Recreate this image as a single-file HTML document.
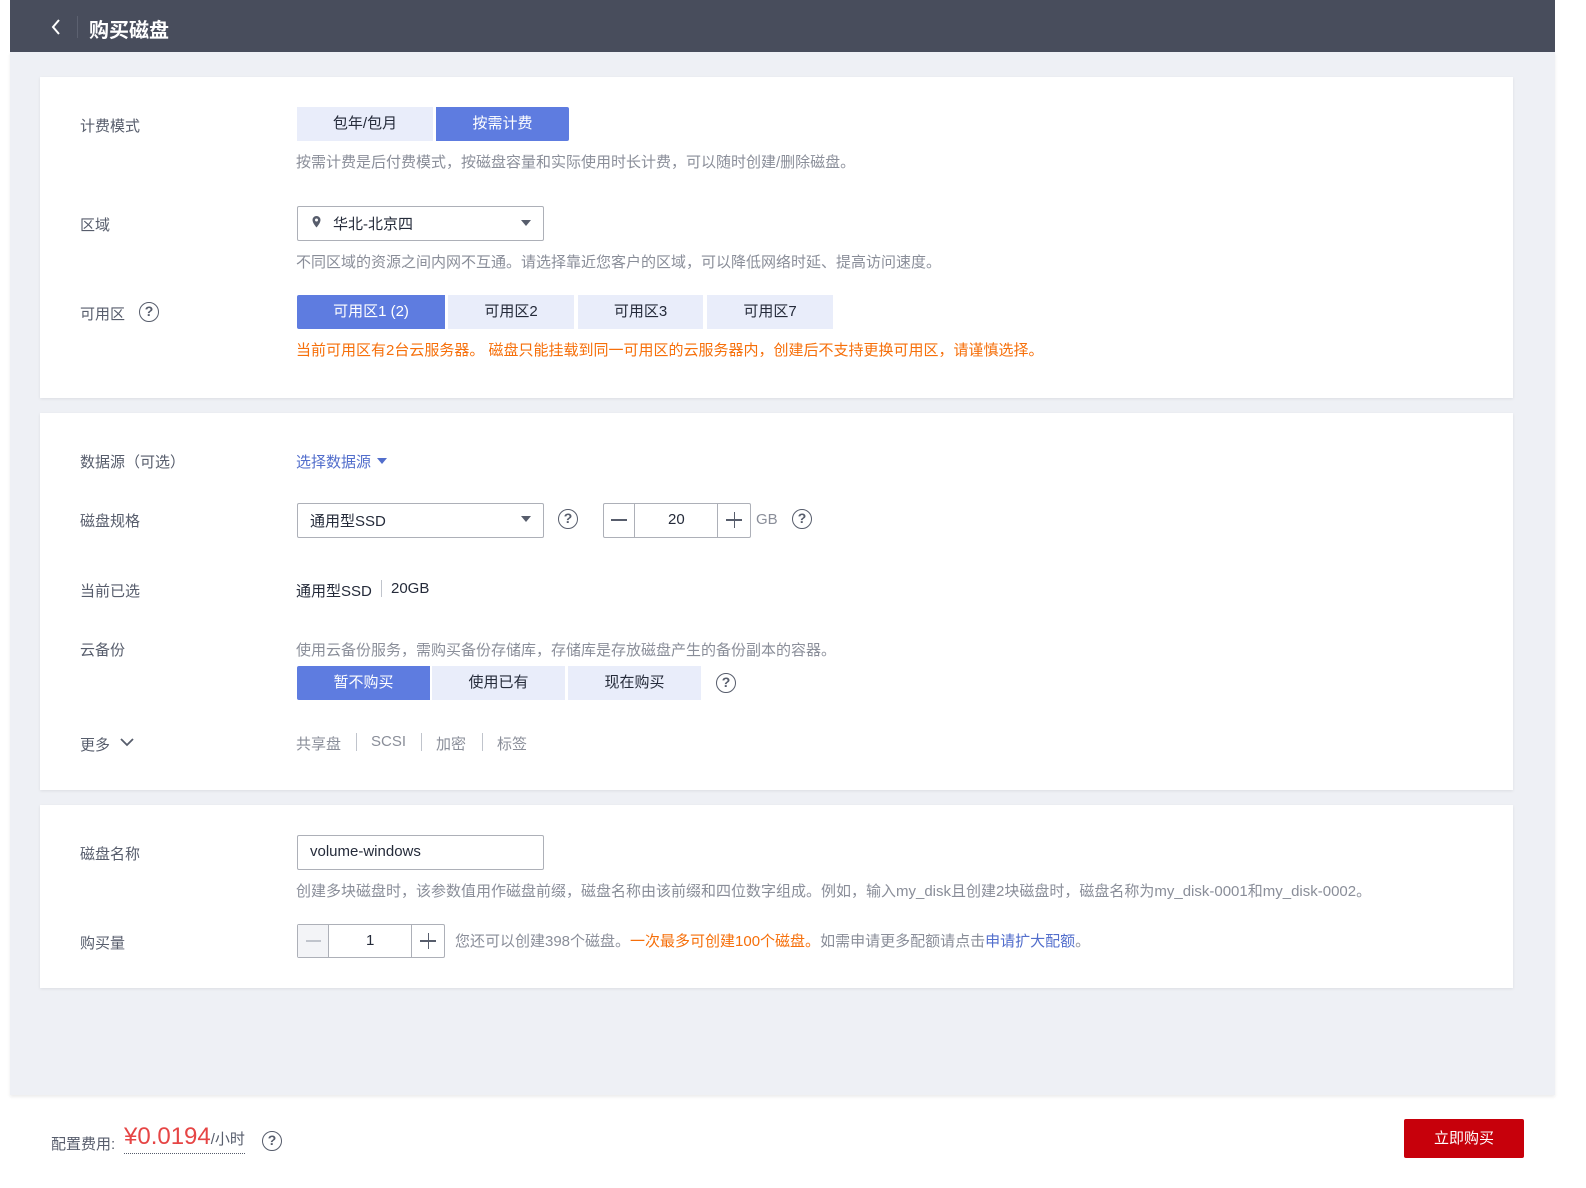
<!DOCTYPE html>
<html><head><meta charset="utf-8"><style>
*{margin:0;padding:0;box-sizing:border-box}
body{width:1586px;height:1188px;position:relative;background:#fff;font-family:"Liberation Sans","Noto Sans CJK SC",sans-serif;font-size:15px;color:#252b3a;overflow:hidden}
.a{position:absolute;white-space:nowrap}
.bg{position:absolute;left:10px;top:52px;width:1545px;height:1043px;background:#eef0f5;box-shadow:0 2px 3px rgba(0,0,0,.08)}
.hd{position:absolute;left:10px;top:0;width:1545px;height:52px;background:#484d5c}
.card{position:absolute;left:40px;width:1473px;background:#fff;box-shadow:0 1px 3px rgba(0,0,0,.08)}
.lbl{color:#575d6c;font-size:15px}
.hint{color:#8a8e99;font-size:15px}
.btn{position:absolute;height:34px;line-height:34px;text-align:center;background:#e9edfa;color:#252b3a;font-size:15px}
.on{background:#5e7ce0;color:#fff}
.sel{position:absolute;height:35px;border:1px solid #adb0b8;border-radius:2px;background:#fff}
.q{position:absolute;width:20px;height:20px;border:1.6px solid #575d6c;border-radius:50%;text-align:center;line-height:17px;font-size:14px;font-weight:bold;color:#575d6c}
.caret{position:absolute;width:0;height:0;border-left:5px solid transparent;border-right:5px solid transparent;border-top:6px solid #575d6c}
</style></head><body>
<div class="bg"></div>
<div class="hd"></div>
<svg class="a" style="left:49px;top:17px" width="14" height="20"><path d="M10 3 L4 10 L10 17" stroke="#fff" stroke-width="2" fill="none"/></svg>
<div class="a" style="left:77px;top:16px;width:1px;height:22px;background:#5c6170"></div>
<div class="a" style="left:89px;top:14px;color:#fff;font-size:20px;font-weight:bold">购买磁盘</div>

<div class="card" style="top:77px;height:321px"></div>
<div class="card" style="top:413px;height:377px"></div>
<div class="card" style="top:805px;height:183px"></div>

<div class="a lbl" style="left:80px;top:115px">计费模式</div>
<div class="btn" style="left:297px;top:107px;width:136px">包年/包月</div>
<div class="btn on" style="left:436px;top:107px;width:133px;border-radius:0 2px 2px 0">按需计费</div>
<div class="a hint" style="left:296px;top:151px">按需计费是后付费模式，按磁盘容量和实际使用时长计费，可以随时创建/删除磁盘。</div>

<div class="a lbl" style="left:80px;top:214px">区域</div>
<div class="sel" style="left:297px;top:206px;width:247px"></div>
<svg class="a" style="left:311px;top:215px" width="11" height="14"><path d="M5.5 1a4 4 0 0 0-4 4c0 3 4 7.5 4 7.5s4-4.5 4-7.5a4 4 0 0 0-4-4z" fill="#575d6c"/><circle cx="5.5" cy="5" r="1.5" fill="#fff"/></svg>
<div class="a" style="left:333px;top:213px">华北-北京四</div>
<div class="caret" style="left:521px;top:220px"></div>
<div class="a hint" style="left:296px;top:251px">不同区域的资源之间内网不互通。请选择靠近您客户的区域，可以降低网络时延、提高访问速度。</div>

<div class="a lbl" style="left:80px;top:303px">可用区</div>
<div class="q" style="left:139px;top:302px">?</div>
<div class="btn on" style="left:297px;top:295px;width:148px;border-radius:2px 0 0 2px">可用区1 (2)</div>
<div class="btn" style="left:448px;top:295px;width:126px">可用区2</div>
<div class="btn" style="left:578px;top:295px;width:125px">可用区3</div>
<div class="btn" style="left:707px;top:295px;width:126px">可用区7</div>
<div class="a" style="left:296px;top:339px;color:#f66f0a">当前可用区有2台云服务器。 磁盘只能挂载到同一可用区的云服务器内，创建后不支持更换可用区，请谨慎选择。</div>

<div class="a lbl" style="left:80px;top:451px">数据源（可选）</div>
<div class="a" style="left:296px;top:451px;color:#526ecc">选择数据源</div>
<div class="caret" style="left:377px;top:458px;border-top-color:#526ecc"></div>

<div class="a lbl" style="left:80px;top:510px">磁盘规格</div>
<div class="sel" style="left:297px;top:503px;width:247px"></div>
<div class="a" style="left:310px;top:510px">通用型SSD</div>
<div class="caret" style="left:521px;top:516px"></div>
<div class="q" style="left:558px;top:509px">?</div>
<div class="sel" style="left:603px;top:503px;width:148px"></div>
<div class="a" style="left:634px;top:504px;width:1px;height:33px;background:#adb0b8"></div>
<div class="a" style="left:717px;top:504px;width:1px;height:33px;background:#adb0b8"></div>
<div class="a" style="left:611px;top:519px;width:16px;height:1.5px;background:#575d6c"></div>
<div class="a" style="left:726px;top:519px;width:16px;height:1.5px;background:#575d6c"></div>
<div class="a" style="left:733.5px;top:512px;width:1.5px;height:16px;background:#575d6c"></div>
<div class="a" style="left:668px;top:511px">20</div>
<div class="a hint" style="left:756px;top:511px">GB</div>
<div class="q" style="left:792px;top:509px">?</div>

<div class="a lbl" style="left:80px;top:580px">当前已选</div>
<div class="a" style="left:296px;top:580px">通用型SSD</div>
<div class="a" style="left:381px;top:580px;width:1px;height:17px;background:#c0c4cc"></div>
<div class="a" style="left:391px;top:580px">20GB</div>

<div class="a lbl" style="left:80px;top:639px">云备份</div>
<div class="a hint" style="left:296px;top:639px">使用云备份服务，需购买备份存储库，存储库是存放磁盘产生的备份副本的容器。</div>
<div class="btn on" style="left:297px;top:666px;width:133px;border-radius:2px 0 0 2px">暂不购买</div>
<div class="btn" style="left:432px;top:666px;width:133px">使用已有</div>
<div class="btn" style="left:568px;top:666px;width:133px">现在购买</div>
<div class="q" style="left:716px;top:673px">?</div>

<div class="a lbl" style="left:80px;top:734px">更多</div>
<svg class="a" style="left:120px;top:737px" width="14" height="10"><path d="M1 2 L7 8 L13 2" stroke="#575d6c" stroke-width="1.8" fill="none"/></svg>
<div class="a hint" style="left:296px;top:733px">共享盘</div>
<div class="a" style="left:356px;top:733px;width:1px;height:18px;background:#c0c4cc"></div>
<div class="a hint" style="left:371px;top:733px">SCSI</div>
<div class="a" style="left:421px;top:733px;width:1px;height:18px;background:#c0c4cc"></div>
<div class="a hint" style="left:436px;top:733px">加密</div>
<div class="a" style="left:482px;top:733px;width:1px;height:18px;background:#c0c4cc"></div>
<div class="a hint" style="left:497px;top:733px">标签</div>

<div class="a lbl" style="left:80px;top:843px">磁盘名称</div>
<div class="sel" style="left:297px;top:835px;width:247px"></div>
<div class="a" style="left:310px;top:843px">volume-windows</div>
<div class="a hint" style="left:296px;top:880px">创建多块磁盘时，该参数值用作磁盘前缀，磁盘名称由该前缀和四位数字组成。例如，输入my_disk且创建2块磁盘时，磁盘名称为my_disk-0001和my_disk-0002。</div>

<div class="a lbl" style="left:80px;top:932px">购买量</div>
<div class="sel" style="left:297px;top:924px;width:148px;height:34px"></div>
<div class="a" style="left:298px;top:925px;width:31px;height:32px;background:#f3f4f7;border-right:1px solid #adb0b8"></div>
<div class="a" style="left:411px;top:925px;width:1px;height:32px;background:#adb0b8"></div>
<div class="a" style="left:306px;top:940px;width:15px;height:1.5px;background:#c0c4cc"></div>
<div class="a" style="left:420px;top:940px;width:16px;height:1.5px;background:#575d6c"></div>
<div class="a" style="left:427.5px;top:933px;width:1.5px;height:16px;background:#575d6c"></div>
<div class="a" style="left:366px;top:932px">1</div>
<div class="a hint" style="left:455px;top:930px">您还可以创建398个磁盘。<span style="color:#f66f0a">一次最多可创建100个磁盘。</span>如需申请更多配额请点击<span style="color:#526ecc">申请扩大配额</span>。</div>

<div class="a" style="left:51px;top:1133px;color:#575d6c;font-size:15px">配置费用:</div>
<div class="a" style="left:124px;top:1124px;color:#e64545;font-size:24px;border-bottom:1.5px dotted #575d6c;line-height:26px">¥0.0194<span style="font-size:15px;color:#575d6c">/小时</span></div>
<div class="q" style="left:262px;top:1131px">?</div>
<div class="a" style="left:1404px;top:1119px;width:120px;height:39px;background:#c7000b;color:#fff;text-align:center;line-height:39px;border-radius:2px">立即购买</div>
</body></html>
